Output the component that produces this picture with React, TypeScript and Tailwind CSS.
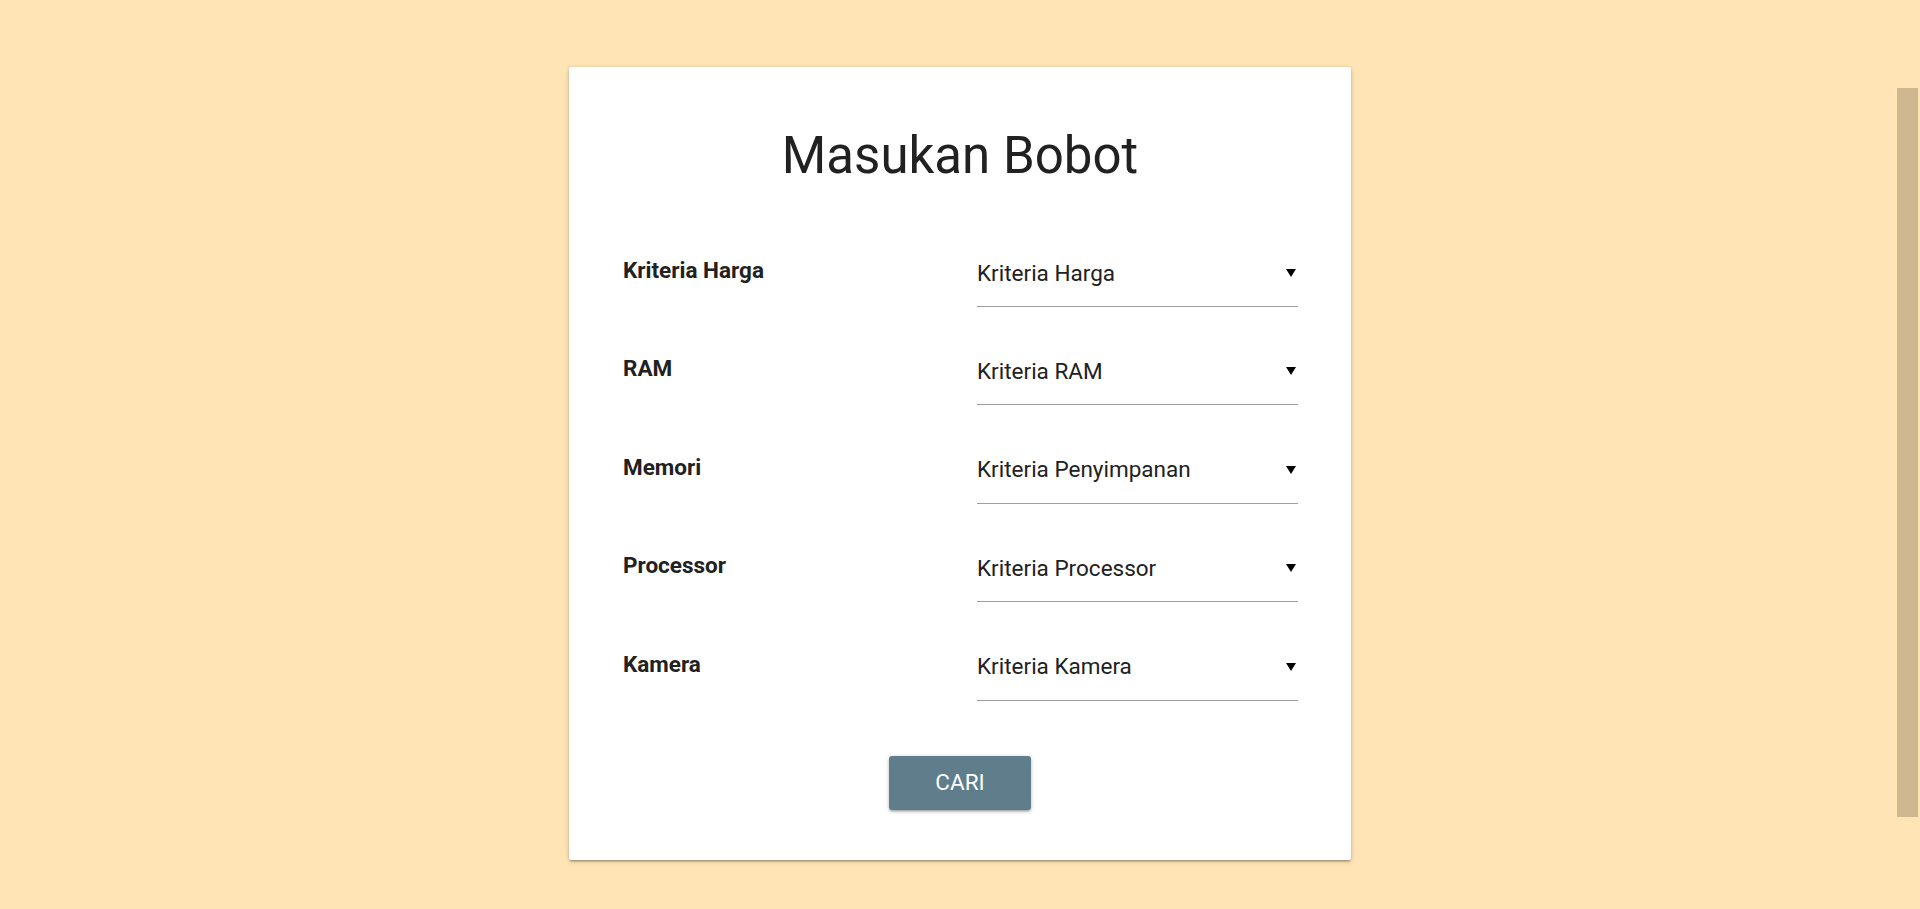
import React from "react";

const rows = [
  { label: "Kriteria Harga", value: "Kriteria Harga" },
  { label: "RAM", value: "Kriteria RAM" },
  { label: "Memori", value: "Kriteria Penyimpanan" },
  { label: "Processor", value: "Kriteria Processor" },
  { label: "Kamera", value: "Kriteria Kamera" },
];

export default function App() {
  return (
    <div
      className="relative min-h-screen w-full bg-[#ffe4b5] overflow-hidden"
      style={{ fontFamily: "Roboto, 'Noto Sans', sans-serif" }}
    >
      <div className="flex justify-center pt-[67px]">
        <div className="w-[782px] rounded-[2px] bg-white pt-[58px] pb-[49.5px] shadow-[0_2px_2px_0_rgba(0,0,0,0.14),0_3px_1px_-2px_rgba(0,0,0,0.12),0_1px_5px_0_rgba(0,0,0,0.2)]">
          <h3 className="text-center text-[51px] leading-[62px] font-normal text-[#212121]">
            Masukan Bobot
          </h3>
          <div className="mt-[70px] flex flex-col gap-[48.4px] pl-[54px]">
            {rows.map((r) => (
              <div key={r.label} className="flex items-start">
                <div className="w-[354px] text-[22.5px] leading-[26px] font-bold text-[#212121]">
                  {r.label}
                </div>
                <div className="relative mt-[2.5px] w-[321px] border-b border-[#9e9e9e] pb-[20.5px]">
                  <div className="text-[22.5px] leading-[26px] text-[#212121]">{r.value}</div>
                  <svg
                    className="absolute right-[2px] top-[9.5px]"
                    width="10"
                    height="8"
                    viewBox="0 0 10 8"
                  >
                    <polygon points="0,0 10,0 5,8" fill="#000" />
                  </svg>
                </div>
              </div>
            ))}
          </div>
          <div className="mt-[55.5px] flex justify-center">
            <button className="h-[54px] w-[142px] rounded-[3px] bg-[#607d8b] text-[22.5px] uppercase text-white shadow-[0_2px_2px_0_rgba(0,0,0,0.14),0_3px_1px_-2px_rgba(0,0,0,0.12),0_1px_5px_0_rgba(0,0,0,0.2)]">
              Cari
            </button>
          </div>
        </div>
      </div>
      <div className="absolute right-[2px] top-[88px] h-[729px] w-[21px] bg-[#cfb890]" />
    </div>
  );
}
